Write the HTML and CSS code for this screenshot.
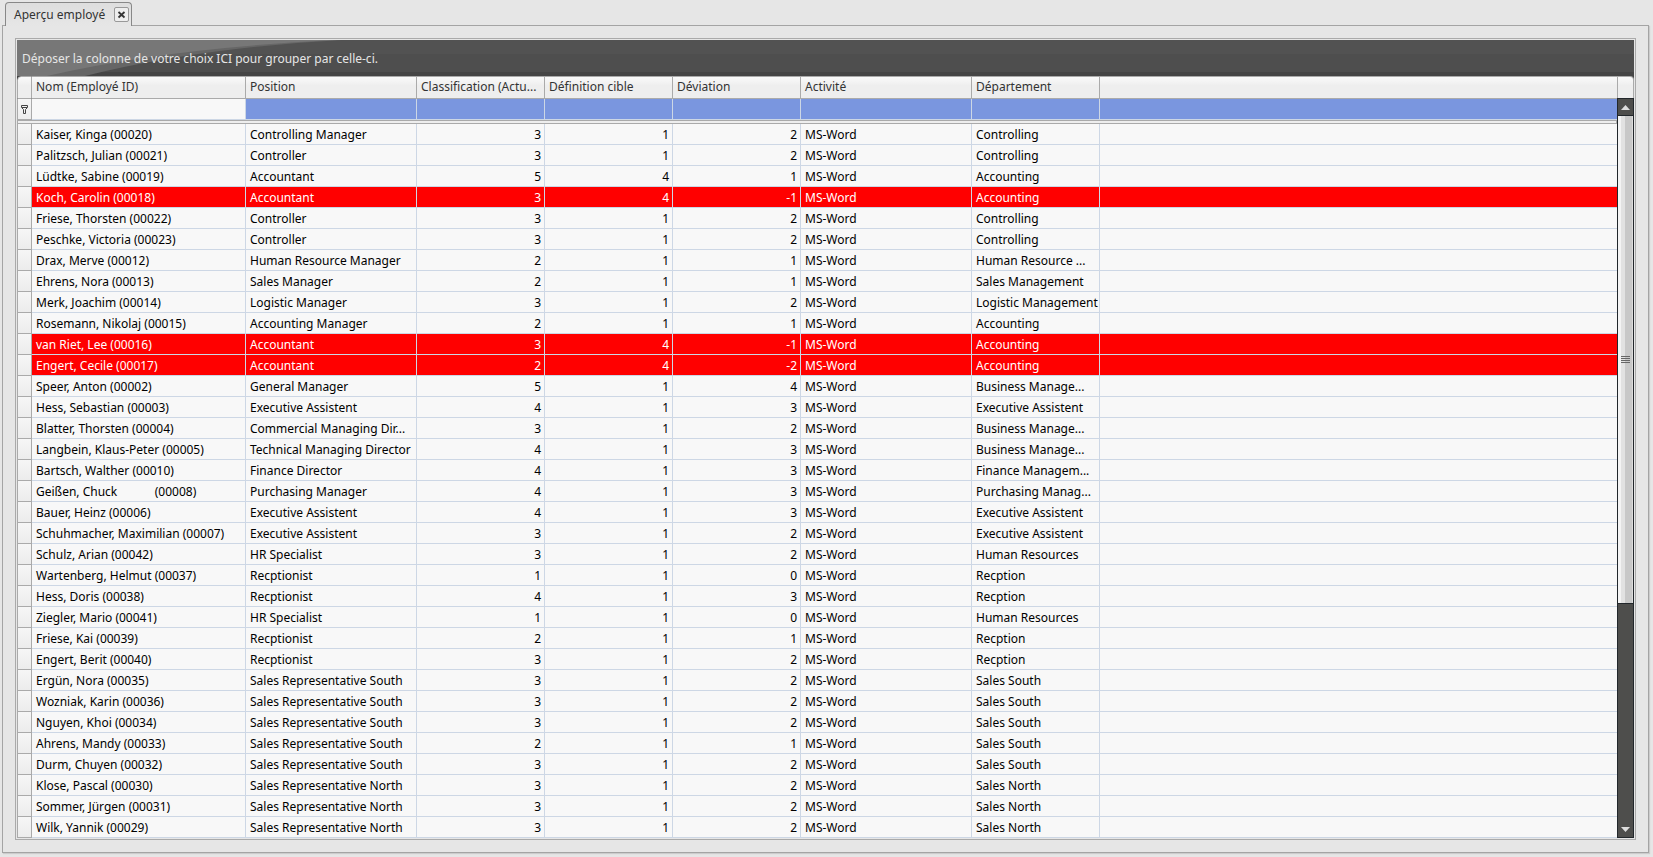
FILE: index.html
```
<!DOCTYPE html>
<html lang="fr">
<head>
<meta charset="utf-8">
<title>Aperçu employé</title>
<link rel="stylesheet" href="styles.css">
</head>
<body>
<div class="tabs">
  <div class="tab">
    <span class="tab-title">Aperçu employé</span>
    <button class="tab-close" type="button" aria-label="Fermer"><svg viewBox="0 0 13 13" width="13" height="13"><path d="M3.5 4L9.5 9.5M9.5 4L3.5 9.5" stroke="#333" stroke-width="1.8"/></svg></button>
  </div>
</div>
<main class="page">
  <section class="grid">
    <div class="group-bar">
      <svg class="swoosh" viewBox="0 0 330 36" width="330" height="36" aria-hidden="true">
        <path d="M0 0H325Q180 8 68 36H0Z" fill="#666"/>
        <path d="M0 0H320Q150 8 30 36H0Z" fill="#777"/>
      </svg>
      <span class="group-text">Déposer la colonne de votre choix ICI pour grouper par celle-ci.</span>
    </div>
    <div class="grid-body">
      <table class="data">
        <colgroup><col class="c-handle"><col class="c-name"><col class="c-wide"><col class="c-mid"><col class="c-mid"><col class="c-mid"><col class="c-wide"><col class="c-mid"><col></colgroup>
        <thead>
          <tr class="head"><th></th><th>Nom (Employé ID)</th><th>Position</th><th>Classification (Actu...</th><th>Définition cible</th><th>Déviation</th><th>Activité</th><th>Département</th><th></th></tr>
          <tr class="filter"><td><svg viewBox="0 0 9 11" width="9" height="11"><path d="M1.5 1.5H7.5V3.5H1.5ZM2 4L3.5 5.5V9.5H5.5V5.5L7 4" fill="none" stroke="#444" stroke-width="1"/></svg></td><td><input class="first" aria-label="Filtre Nom"></td><td><input aria-label="Filtre Position"></td><td><input aria-label="Filtre Classification"></td><td><input aria-label="Filtre Définition cible"></td><td><input aria-label="Filtre Déviation"></td><td><input aria-label="Filtre Activité"></td><td><input aria-label="Filtre Département"></td><td class="blank"></td></tr>
          <tr class="split"><td colspan="9"></td></tr>
        </thead>
        <tbody>
          <tr><td></td><td>Kaiser, Kinga (00020)</td><td>Controlling Manager</td><td>3</td><td>1</td><td>2</td><td>MS-Word</td><td>Controlling</td><td></td></tr>
          <tr><td></td><td>Palitzsch, Julian (00021)</td><td>Controller</td><td>3</td><td>1</td><td>2</td><td>MS-Word</td><td>Controlling</td><td></td></tr>
          <tr><td></td><td>Lüdtke, Sabine (00019)</td><td>Accountant</td><td>5</td><td>4</td><td>1</td><td>MS-Word</td><td>Accounting</td><td></td></tr>
          <tr class="alert"><td></td><td>Koch, Carolin (00018)</td><td>Accountant</td><td>3</td><td>4</td><td>-1</td><td>MS-Word</td><td>Accounting</td><td></td></tr>
          <tr><td></td><td>Friese, Thorsten (00022)</td><td>Controller</td><td>3</td><td>1</td><td>2</td><td>MS-Word</td><td>Controlling</td><td></td></tr>
          <tr><td></td><td>Peschke, Victoria (00023)</td><td>Controller</td><td>3</td><td>1</td><td>2</td><td>MS-Word</td><td>Controlling</td><td></td></tr>
          <tr><td></td><td>Drax, Merve (00012)</td><td>Human Resource Manager</td><td>2</td><td>1</td><td>1</td><td>MS-Word</td><td>Human Resource ...</td><td></td></tr>
          <tr><td></td><td>Ehrens, Nora (00013)</td><td>Sales Manager</td><td>2</td><td>1</td><td>1</td><td>MS-Word</td><td>Sales Management</td><td></td></tr>
          <tr><td></td><td>Merk, Joachim (00014)</td><td>Logistic Manager</td><td>3</td><td>1</td><td>2</td><td>MS-Word</td><td>Logistic Management</td><td></td></tr>
          <tr><td></td><td>Rosemann, Nikolaj (00015)</td><td>Accounting Manager</td><td>2</td><td>1</td><td>1</td><td>MS-Word</td><td>Accounting</td><td></td></tr>
          <tr class="alert"><td></td><td>van Riet, Lee (00016)</td><td>Accountant</td><td>3</td><td>4</td><td>-1</td><td>MS-Word</td><td>Accounting</td><td></td></tr>
          <tr class="alert"><td></td><td>Engert, Cecile (00017)</td><td>Accountant</td><td>2</td><td>4</td><td>-2</td><td>MS-Word</td><td>Accounting</td><td></td></tr>
          <tr><td></td><td>Speer, Anton (00002)</td><td>General Manager</td><td>5</td><td>1</td><td>4</td><td>MS-Word</td><td>Business Manage...</td><td></td></tr>
          <tr><td></td><td>Hess, Sebastian (00003)</td><td>Executive Assistent</td><td>4</td><td>1</td><td>3</td><td>MS-Word</td><td>Executive Assistent</td><td></td></tr>
          <tr><td></td><td>Blatter, Thorsten (00004)</td><td>Commercial Managing Dir...</td><td>3</td><td>1</td><td>2</td><td>MS-Word</td><td>Business Manage...</td><td></td></tr>
          <tr><td></td><td>Langbein, Klaus-Peter (00005)</td><td>Technical Managing Director</td><td>4</td><td>1</td><td>3</td><td>MS-Word</td><td>Business Manage...</td><td></td></tr>
          <tr><td></td><td>Bartsch, Walther (00010)</td><td>Finance Director</td><td>4</td><td>1</td><td>3</td><td>MS-Word</td><td>Finance Managem...</td><td></td></tr>
          <tr><td></td><td>Geißen, Chuck            (00008)</td><td>Purchasing Manager</td><td>4</td><td>1</td><td>3</td><td>MS-Word</td><td>Purchasing Manag...</td><td></td></tr>
          <tr><td></td><td>Bauer, Heinz (00006)</td><td>Executive Assistent</td><td>4</td><td>1</td><td>3</td><td>MS-Word</td><td>Executive Assistent</td><td></td></tr>
          <tr><td></td><td>Schuhmacher, Maximilian (00007)</td><td>Executive Assistent</td><td>3</td><td>1</td><td>2</td><td>MS-Word</td><td>Executive Assistent</td><td></td></tr>
          <tr><td></td><td>Schulz, Arian (00042)</td><td>HR Specialist</td><td>3</td><td>1</td><td>2</td><td>MS-Word</td><td>Human Resources</td><td></td></tr>
          <tr><td></td><td>Wartenberg, Helmut (00037)</td><td>Recptionist</td><td>1</td><td>1</td><td>0</td><td>MS-Word</td><td>Recption</td><td></td></tr>
          <tr><td></td><td>Hess, Doris (00038)</td><td>Recptionist</td><td>4</td><td>1</td><td>3</td><td>MS-Word</td><td>Recption</td><td></td></tr>
          <tr><td></td><td>Ziegler, Mario (00041)</td><td>HR Specialist</td><td>1</td><td>1</td><td>0</td><td>MS-Word</td><td>Human Resources</td><td></td></tr>
          <tr><td></td><td>Friese, Kai (00039)</td><td>Recptionist</td><td>2</td><td>1</td><td>1</td><td>MS-Word</td><td>Recption</td><td></td></tr>
          <tr><td></td><td>Engert, Berit (00040)</td><td>Recptionist</td><td>3</td><td>1</td><td>2</td><td>MS-Word</td><td>Recption</td><td></td></tr>
          <tr><td></td><td>Ergün, Nora (00035)</td><td>Sales Representative South</td><td>3</td><td>1</td><td>2</td><td>MS-Word</td><td>Sales South</td><td></td></tr>
          <tr><td></td><td>Wozniak, Karin (00036)</td><td>Sales Representative South</td><td>3</td><td>1</td><td>2</td><td>MS-Word</td><td>Sales South</td><td></td></tr>
          <tr><td></td><td>Nguyen, Khoi (00034)</td><td>Sales Representative South</td><td>3</td><td>1</td><td>2</td><td>MS-Word</td><td>Sales South</td><td></td></tr>
          <tr><td></td><td>Ahrens, Mandy (00033)</td><td>Sales Representative South</td><td>2</td><td>1</td><td>1</td><td>MS-Word</td><td>Sales South</td><td></td></tr>
          <tr><td></td><td>Durm, Chuyen (00032)</td><td>Sales Representative South</td><td>3</td><td>1</td><td>2</td><td>MS-Word</td><td>Sales South</td><td></td></tr>
          <tr><td></td><td>Klose, Pascal (00030)</td><td>Sales Representative North</td><td>3</td><td>1</td><td>2</td><td>MS-Word</td><td>Sales North</td><td></td></tr>
          <tr><td></td><td>Sommer, Jürgen (00031)</td><td>Sales Representative North</td><td>3</td><td>1</td><td>2</td><td>MS-Word</td><td>Sales North</td><td></td></tr>
          <tr><td></td><td>Wilk, Yannik (00029)</td><td>Sales Representative North</td><td>3</td><td>1</td><td>2</td><td>MS-Word</td><td>Sales North</td><td></td></tr>
        </tbody>
      </table>
      <div class="side">
        <div class="side-head"></div>
        <div class="scroll">
          <button class="arrow up" type="button" aria-label="Défiler vers le haut"><svg viewBox="0 0 9 5" width="9" height="5"><path d="M0 5L4.5 0L9 5Z" fill="#ddd"/></svg></button>
          <div class="thumb"><i></i><i></i><i></i><i></i></div>
          <div class="track"></div>
          <button class="arrow" type="button" aria-label="Défiler vers le bas"><svg viewBox="0 0 9 5" width="9" height="5"><path d="M0 0H9L4.5 5Z" fill="#ddd"/></svg></button>
        </div>
      </div>
    </div>
  </section>
</main>
</body>
</html>
```
FILE: styles.css
```
* { box-sizing: border-box; }
body {
  margin: 0;
  min-height: 100vh;
  padding: 2px 4px 4px 2px;
  display: flex;
  flex-direction: column;
  background: #e6e6e6;
  color: #000;
  font: 12px/16px "Noto Sans", "DejaVu Sans Condensed", sans-serif;
}
button { padding: 0; }
svg { display: block; }
.tabs { display: flex; padding-left: 3px; }
.tab {
  position: relative;
  z-index: 1;
  display: flex;
  align-items: center;
  gap: 9px;
  height: 24px;
  margin-bottom: -1px;
  padding: 0 2px 0 8px;
  border: 1px solid #888;
  border-bottom: 0;
  border-radius: 4px 4px 0 0;
  background: linear-gradient(#dedede, #e6e6e6);
  color: #333;
}
.tab-close {
  display: grid;
  place-items: center;
  width: 15px;
  height: 15px;
  border: 1px solid #999;
  border-radius: 2px;
  background: #eee;
}
.page {
  flex: 1;
  padding: 12px;
  border: 1px solid #a4a4a4;
  box-shadow: 1px 1px 1px #ccc;
}
.grid {
  border: 1px solid #aaa;
  padding: 1px;
  background: #e6e6e6;
}
.group-bar {
  position: relative;
  display: flex;
  align-items: center;
  height: 36px;
  padding: 2px 5px 0;
  background: linear-gradient(#525252 0 14px, #4e4e4e 14px 32px, #454545 32px);
  color: #e6e6e6;
}
.swoosh { position: absolute; left: 0; top: 0; }
.group-text { position: relative; }
.grid-body {
  display: flex;
  background: #454545;
}
.data {
  flex: 1;
  table-layout: fixed;
  width: 100%;
  border-spacing: 0;
  border-top-left-radius: 4px;
  overflow: hidden;
}
.c-handle { width: 15px; }
.c-name { width: 214px; }
.c-wide { width: 171px; }
.c-mid { width: 128px; }
th, td {
  height: 21px;
  padding: 0 3px 0 4px;
  overflow: hidden;
  white-space: pre;
  text-align: left;
  font-weight: 400;
  border-right: 1px solid #cdd7e5;
  border-bottom: 1px solid #cdd7e5;
  background: #f8f8f8;
}
th:last-child, tbody td:last-child { border-right: 0; }
td:first-child {
  padding: 0 2px;
  border-left: 1px solid #aaa;
  border-right-color: #aaa;
  border-bottom-color: #aaa;
  background: linear-gradient(#f6f6f6, #ececec);
}
tbody td { padding-top: 1px; }
tbody td:nth-child(n+4):nth-child(-n+6) { text-align: right; }
.head th {
  height: 23px;
  padding-bottom: 2px;
  border-top: 1px solid #aaa;
  border-right-color: #aaa;
  border-bottom-color: #aaa;
  background: linear-gradient(#fafafa, #eee 40%);
  color: #333;
}
.head th:first-child { border-left: 1px solid #aaa; border-top-left-radius: 4px; }
.filter td { padding: 0; }
.filter td:first-child { padding: 0 2px; }
.filter input {
  display: block;
  width: 100%;
  height: 20px;
  padding: 0 4px;
  border: 0;
  border-radius: 0;
  outline: 0;
  background: #7a96df;
  font: inherit;
}
.filter input.first { background: #f8f8f8; }
.filter .blank { border-right: 0; background: #7a96df; }
.data .split td {
  height: 4px;
  padding: 0;
  border: 1px solid #aaa;
  background: #eee;
}
.alert td:not(:first-child) { background: #f00; color: #fff; }
.side {
  display: flex;
  flex-direction: column;
  width: 17px;
}
.side-head {
  height: 22px;
  border: 1px solid #aaa;
  border-bottom: 0;
  border-top-right-radius: 4px;
  background: linear-gradient(#fafafa, #eee 40%);
}
.scroll {
  flex: 1;
  display: flex;
  flex-direction: column;
  border: 1px solid #22272b;
  background: #4e4e4c;
}
.arrow {
  display: grid;
  place-items: center;
  height: 16px;
  border: 0;
  background: #4e4e4c;
}
.thumb {
  flex: 488;
  display: flex;
  flex-direction: column;
  align-items: center;
  justify-content: center;
  gap: 1px;
  border: 1px solid #22272b;
  border-width: 1px 0;
  background: linear-gradient(90deg, #f4f4f4 3px, #e2e2e2 3px 7px, #c8c8c8 7px 14px, #ddd 14px);
}
.thumb i { width: 9px; height: 1px; background: #666; }
.track { flex: 217; }
```
